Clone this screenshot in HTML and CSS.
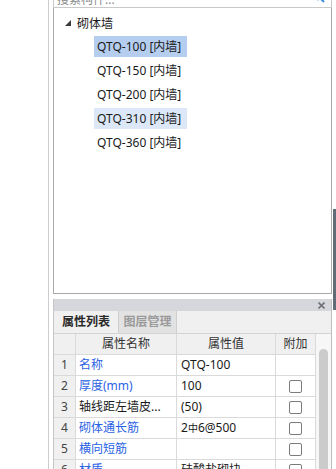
FILE: index.html
```html
<!DOCTYPE html>
<html>
<head>
<meta charset="utf-8">
<link rel="stylesheet" href="styles.css">
</head>
<body>
<div class="app">
  <div class="leftstrip"></div>
  <div class="panel">
    <div class="search">
      <span class="search-text">搜索构件...</span>
      <svg class="search-icon" width="12" height="12" viewBox="0 0 12 12"><circle cx="5" cy="5" r="3.5" fill="none" stroke="#3b8fd8" stroke-width="1.5"/><line x1="7.5" y1="7.5" x2="11" y2="11" stroke="#3b8fd8" stroke-width="2"/></svg>
    </div>
    <div class="tree">
      <div class="tree-group">
        <svg class="tri" width="6" height="6" viewBox="0 0 6 6"><polygon points="6,0 6,6 0,6" fill="#3a3a3a"/></svg>
        <span class="group-label">砌体墙</span>
      </div>
      <div class="tree-item selected">QTQ-100 [内墙]</div>
      <div class="tree-item">QTQ-150 [内墙]</div>
      <div class="tree-item">QTQ-200 [内墙]</div>
      <div class="tree-item hover">QTQ-310 [内墙]</div>
      <div class="tree-item">QTQ-360 [内墙]</div>
    </div>
    <div class="dock">
      <div class="dock-head">
        <svg class="close" width="7" height="7" viewBox="0 0 7 7"><path d="M0.5 0.5 L6.5 6.5 M6.5 0.5 L0.5 6.5" stroke="#6f7378" stroke-width="1.6"/></svg>
      </div>
      <div class="tabs">
        <div class="tab active">属性列表</div>
        <div class="tab inactive">图层管理</div>
      </div>
      <div class="grid-wrap">
        <div class="props">
          <div class="row head">
            <div class="c idx"></div>
            <div class="c name center">属性名称</div>
            <div class="c val center">属性值</div>
            <div class="c add center">附加</div>
          </div>
          <div class="row">
            <div class="c idx">1</div>
            <div class="c name blue">名称</div>
            <div class="c val">QTQ-100</div>
            <div class="c add"></div>
          </div>
          <div class="row">
            <div class="c idx">2</div>
            <div class="c name blue">厚度(mm)</div>
            <div class="c val">100</div>
            <div class="c add"><span class="cb"></span></div>
          </div>
          <div class="row">
            <div class="c idx">3</div>
            <div class="c name">轴线距左墙皮...</div>
            <div class="c val">(50)</div>
            <div class="c add"><span class="cb"></span></div>
          </div>
          <div class="row">
            <div class="c idx">4</div>
            <div class="c name blue">砌体通长筋</div>
            <div class="c val">2<span class="steel">中</span>6@500</div>
            <div class="c add"><span class="cb"></span></div>
          </div>
          <div class="row">
            <div class="c idx">5</div>
            <div class="c name blue">横向短筋</div>
            <div class="c val"></div>
            <div class="c add"><span class="cb"></span></div>
          </div>
          <div class="row">
            <div class="c idx">6</div>
            <div class="c name blue">材质</div>
            <div class="c val">硅酸盐砌块</div>
            <div class="c add"><span class="cb"></span></div>
          </div>
        </div>
        <div class="vscroll"><div class="thumb"></div></div>
      </div>
    </div>
  </div>
  <div class="rightstrip"><div class="grip"></div></div>
</div>
</body>
</html>
```

FILE: styles.css
```css
html, body {
  margin: 0;
  padding: 0;
  background: #ffffff;
  overflow: hidden;
}
body {
  width: 336px;
  height: 469px;
  font-family: "Noto Sans", "Noto Sans CJK SC", sans-serif;
  font-size: 12px;
  color: #1a1a1a;
}
.app {
  display: flex;
  height: 469px;
  overflow: hidden;
}
.leftstrip {
  width: 48px;
  border-right: 1px solid #cdcdd0;
  margin-right: 4px;
  flex: none;
}
.panel {
  width: 279px;
  flex: none;
  display: flex;
  flex-direction: column;
  overflow: hidden;
}
.search {
  height: 18px;
  margin-top: -10px;
  box-sizing: border-box;
  border-bottom: 1px solid #c9c9c9;
  border-left: 1px solid #c9c9c9;
  border-right: 1px solid #c9c9c9;
  display: flex;
  align-items: center;
  padding: 3px 6px 0 3px;
  flex: none;
}
.search-text {
  color: #8a8a8a;
  flex: 1;
  line-height: 14px;
}
.search-icon {
  margin-top: -6px;
}
.tree {
  height: 286px;
  box-sizing: border-box;
  border-left: 1px solid #a9a9a9;
  border-right: 1px solid #a9a9a9;
  border-bottom: 1px solid #a9a9a9;
  padding-top: 4px;
  display: flex;
  flex-direction: column;
  gap: 3px;
  flex: none;
}
.tree-group {
  height: 21px;
  display: flex;
  align-items: center;
  padding-left: 11px;
}
.tri {
  margin-right: 6px;
}
.tree-item {
  height: 21px;
  line-height: 21px;
  align-self: flex-start;
  margin-left: 40px;
  padding: 0 6px 0 3px;
}
.tree-item.selected {
  background: #b5cdee;
}
.tree-item.hover {
  background: #dce8f8;
}
.dock {
  margin-top: 5px;
  flex: 1;
  display: flex;
  flex-direction: column;
  border-left: 1px solid #c6c6c6;
  border-right: 1px solid #bdbdbd;
  min-height: 0;
}
.dock-head {
  height: 12px;
  background: #d5d7dc;
  display: flex;
  align-items: center;
  justify-content: flex-end;
  padding-right: 6px;
  flex: none;
}
.tabs {
  height: 22px;
  background: #f0f0f0;
  border-bottom: 1px solid #d4d4d4;
  display: flex;
  flex: none;
}
.tab {
  line-height: 22px;
  text-align: center;
}
.tab.active {
  width: 64px;
  background: #f0f0f0;
  border-right: 1px solid #cfcfcf;
  font-weight: bold;
  color: #2a2a2a;
}
.tab.inactive {
  width: 57px;
  background: #e2e2e2;
  border-right: 1px solid #cfcfcf;
  color: #9a9a9a;
  font-weight: bold;
}
.grid-wrap {
  display: flex;
  flex: 1;
  min-height: 0;
  overflow: hidden;
}
.props {
  width: 262px;
  flex: none;
}
.row {
  display: flex;
  height: 21px;
  box-sizing: border-box;
  border-bottom: 1px solid #dadada;
}
.c {
  box-sizing: border-box;
  border-right: 1px solid #dadada;
  line-height: 20px;
  white-space: nowrap;
  overflow: hidden;
}
.idx {
  width: 22px;
  background: #f0f0f0;
  text-align: center;
  color: #444;
}
.name {
  width: 101px;
  padding-left: 3px;
}
.val {
  width: 99px;
  padding-left: 4px;
}
.add {
  width: 40px;
  display: flex;
  align-items: center;
  justify-content: center;
}
.center {
  text-align: center;
  padding-left: 0;
}
.head .c {
  background: #f0f0f0;
  color: #333;
}
.blue {
  color: #2a62e4;
}
.steel {
  font-size: 10px;
}
.cb {
  width: 11px;
  height: 11px;
  border: 1px solid #7c7c7c;
  border-radius: 2px;
  background: #fff;
}
.vscroll {
  flex: 1;
  background: #f7f7f7;
  padding-top: 15px;
  padding-left: 3px;
}
.thumb {
  width: 9px;
  height: 200px;
  border-radius: 5px;
  background: #cbcbcb;
}
.rightstrip {
  margin-left: 1px;
  width: 3px;
  flex: none;
}
.grip {
  margin-top: 209px;
  height: 101px;
  background: #5f6b76;
}
```
